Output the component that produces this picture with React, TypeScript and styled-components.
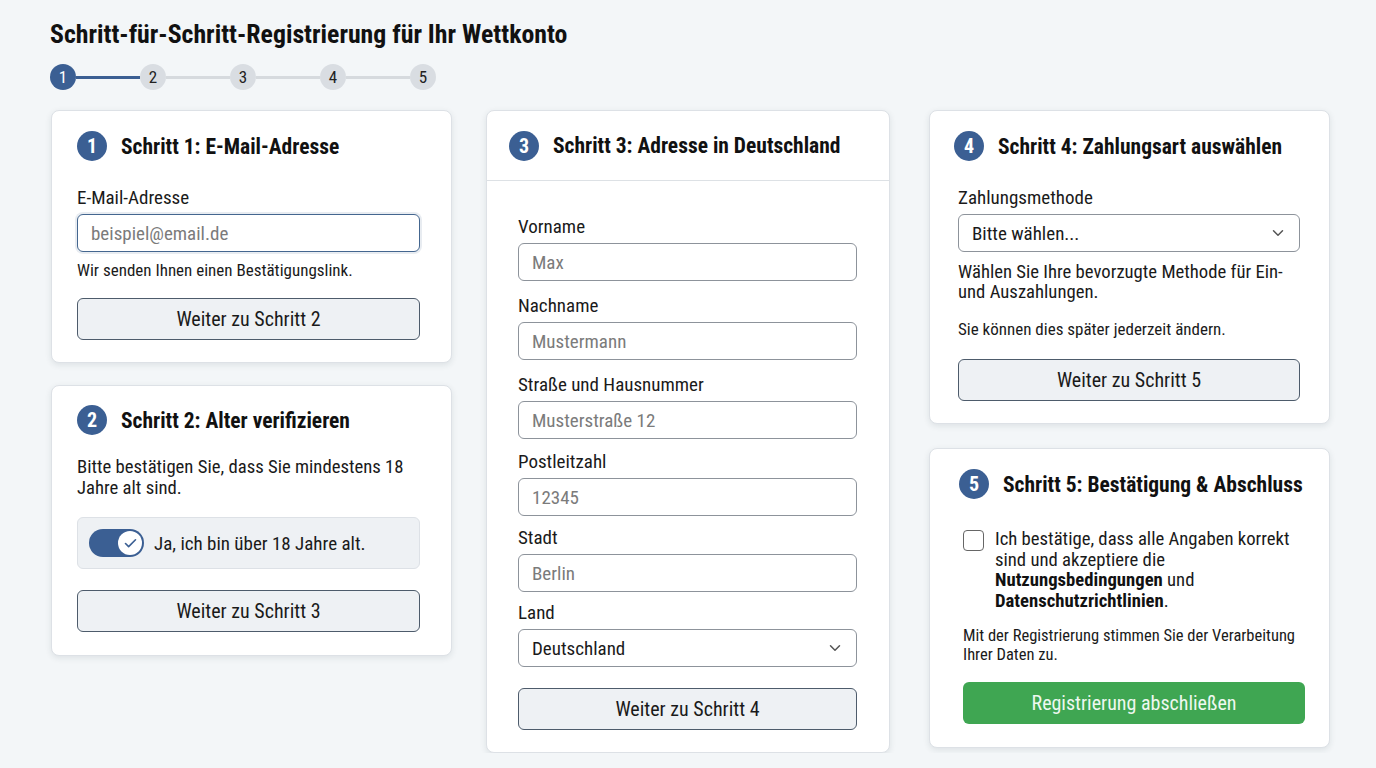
import styled, { createGlobalStyle } from "styled-components";
import { Check, ChevronDown } from "lucide-react";

const Global = createGlobalStyle`
  body {
    margin: 0;
    background: #f3f6f8;
    font-family: "Roboto Condensed", Roboto, "Liberation Sans", sans-serif;
    font-stretch: condensed;
    color: #151515;
  }
  * { box-sizing: border-box; }
`;

const BLUE = "#3b5f93";

export default function App() {
  return (
    <>
      <Global />
      <Page>
        <Title>Schritt-für-Schritt-Registrierung für Ihr Wettkonto</Title>
        <Stepper>
          {[1, 2, 3, 4, 5].map((n) => (
            <StepItem key={n}>
              {n > 1 && <StepLine $done={n === 2} />}
              <StepDot $active={n === 1}>{n}</StepDot>
            </StepItem>
          ))}
        </Stepper>

        <Columns>
          <Column $gap={22}>
            <Card $pad="20px 31px 22px 25px">
              <CardHeader>
                <Badge>1</Badge>
                <CardTitle>Schritt 1: E-Mail-Adresse</CardTitle>
              </CardHeader>
              <Label $top={26}>E-Mail-Adresse</Label>
              <TextInput $focus placeholder="beispiel@email.de" readOnly />
              <Hint $top={8}>Wir senden Ihnen einen Bestätigungslink.</Hint>
              <Button $top={18}>Weiter zu Schritt 2</Button>
            </Card>

            <Card $pad="19px 31px 23px 25px">
              <CardHeader>
                <Badge>2</Badge>
                <CardTitle>Schritt 2: Alter verifizieren</CardTitle>
              </CardHeader>
              <Text $top={22}>
                Bitte bestätigen Sie, dass Sie mindestens 18 Jahre alt sind.
              </Text>
              <ToggleRow>
                <Toggle>
                  <Knob>
                    <Check size={15} strokeWidth={2.6} color={BLUE} />
                  </Knob>
                </Toggle>
                <span>Ja, ich bin über 18 Jahre alt.</span>
              </ToggleRow>
              <Button $top={21}>Weiter zu Schritt 3</Button>
            </Card>
          </Column>

          <Column $gap={0}>
            <Card $pad="0">
              <BandHeader>
                <Badge>3</Badge>
                <CardTitle>Schritt 3: Adresse in Deutschland</CardTitle>
              </BandHeader>
              <CardBody>
                <Label>Vorname</Label>
                <TextInput placeholder="Max" readOnly />
                <Label $top={14}>Nachname</Label>
                <TextInput placeholder="Mustermann" readOnly />
                <Label $top={14}>Straße und Hausnummer</Label>
                <TextInput placeholder="Musterstraße 12" readOnly />
                <Label $top={12}>Postleitzahl</Label>
                <TextInput placeholder="12345" readOnly />
                <Label $top={11}>Stadt</Label>
                <TextInput placeholder="Berlin" readOnly />
                <Label $top={10}>Land</Label>
                <SelectBox>
                  <span>Deutschland</span>
                  <ChevronDown size={18} color="#555" />
                </SelectBox>
                <Button $top={21}>Weiter zu Schritt 4</Button>
              </CardBody>
            </Card>
          </Column>

          <Column $gap={24} $offset={5}>
            <Card $pad="20px 29px 22px 24px">
              <CardHeader>
                <Badge>4</Badge>
                <CardTitle>Schritt 4: Zahlungsart auswählen</CardTitle>
              </CardHeader>
              <Inset>
                <Label $top={26}>Zahlungsmethode</Label>
                <SelectBox>
                  <span>Bitte wählen...</span>
                  <ChevronDown size={18} color="#555" />
                </SelectBox>
                <Text $top={10} $lh={20}>
                  Wählen Sie Ihre bevorzugte Methode für Ein- und Auszahlungen.
                </Text>
                <Hint $top={17}>Sie können dies später jederzeit ändern.</Hint>
                <Button $top={20}>Weiter zu Schritt 5</Button>
              </Inset>
            </Card>

            <Card $pad="20px 24px 23px 29px">
              <CardHeader>
                <Badge>5</Badge>
                <CardTitle>Schritt 5: Bestätigung &amp; Abschluss</CardTitle>
              </CardHeader>
              <Inset>
                <CheckRow>
                  <CheckBox />
                  <span>
                    Ich bestätige, dass alle Angaben korrekt sind und akzeptiere
                    die <b>Nutzungsbedingungen</b> und{" "}
                    <b>Datenschutzrichtlinien</b>.
                  </span>
                </CheckRow>
                <Hint $top={15} $lh={19} $size={16.5}>
                  Mit der Registrierung stimmen Sie der Verarbeitung Ihrer Daten
                  zu.
                </Hint>
                <Button $top={18} $primary>
                  Registrierung abschließen
                </Button>
              </Inset>
            </Card>
          </Column>
        </Columns>
      </Page>
    </>
  );
}

const Page = styled.div`
  padding: 19px 46px 0 50px;
`;

const Title = styled.h1`
  margin: 0;
  font-size: 25.8px;
  line-height: 30px;
  font-weight: 700;
  color: #111;
`;

const Stepper = styled.div`
  display: flex;
  align-items: center;
  margin-top: 15px;
`;

const StepItem = styled.div`
  display: flex;
  align-items: center;
`;

const StepLine = styled.div<{ $done?: boolean }>`
  width: 64px;
  height: 3px;
  background: ${(p) => (p.$done ? BLUE : "#d6dade")};
`;

const StepDot = styled.div<{ $active?: boolean }>`
  width: 26px;
  height: 26px;
  border-radius: 50%;
  display: flex;
  align-items: center;
  justify-content: center;
  font-size: 17px;
  background: ${(p) => (p.$active ? BLUE : "#d9dde2")};
  color: ${(p) => (p.$active ? "#fff" : "#222")};
`;

const Columns = styled.div`
  display: grid;
  grid-template-columns: 401px 404px 406px;
  column-gap: 34px;
  align-items: start;
  margin-top: 20px;
  margin-left: 1px;
`;

const Column = styled.div<{ $gap: number; $offset?: number }>`
  display: flex;
  flex-direction: column;
  gap: ${(p) => p.$gap}px;
  margin-left: ${(p) => p.$offset || 0}px;
`;

const Card = styled.section<{ $pad: string }>`
  background: #fff;
  border: 1px solid #dde1e6;
  border-radius: 8px;
  box-shadow: 0 2px 6px rgba(30, 45, 60, 0.1);
  padding: ${(p) => p.$pad};
  display: flex;
  flex-direction: column;
`;

const CardHeader = styled.div`
  display: flex;
  align-items: center;
  gap: 14px;
  height: 30px;
`;

const BandHeader = styled(CardHeader)`
  height: 70px;
  padding-left: 22px;
  border-bottom: 1px solid #dde1e5;
`;

const CardBody = styled.div`
  padding: 35px 32px 22px 31px;
  display: flex;
  flex-direction: column;
`;

const Inset = styled.div`
  display: flex;
  flex-direction: column;
  padding-left: 4px;
`;

const Badge = styled.div`
  width: 30px;
  height: 30px;
  border-radius: 50%;
  background: ${BLUE};
  color: #fff;
  font-weight: 700;
  font-size: 20px;
  display: flex;
  align-items: center;
  justify-content: center;
  flex-shrink: 0;
`;

const CardTitle = styled.h2`
  margin: 0;
  font-size: 21.5px;
  font-weight: 700;
  white-space: nowrap;
  color: #111;
`;

const Label = styled.label<{ $top?: number }>`
  display: block;
  font-size: 19px;
  line-height: 22px;
  margin-top: ${(p) => p.$top || 0}px;
  margin-bottom: 5px;
  color: #1a1a1a;
`;

const TextInput = styled.input<{ $focus?: boolean }>`
  width: 100%;
  height: 38px;
  padding: 0 13px;
  font: inherit;
  font-size: 19px;
  color: #222;
  background: #fff;
  border-radius: 6px;
  outline: none;
  border: ${(p) => (p.$focus ? `1.5px solid #44668f` : "1px solid #8d939b")};
  box-shadow: ${(p) =>
    p.$focus ? "0 0 0 2px rgba(68, 102, 143, 0.12)" : "none"};
  &::placeholder {
    color: #7b7b7b;
  }
`;

const SelectBox = styled.div`
  height: 38px;
  display: flex;
  align-items: center;
  justify-content: space-between;
  padding: 0 12px 0 13px;
  border: 1px solid #8d939b;
  border-radius: 6px;
  font-size: 19px;
  color: #1a1a1a;
  background: #fff;
`;

const Text = styled.p<{ $top?: number; $lh?: number }>`
  margin: ${(p) => p.$top || 0}px 0 0;
  font-size: 18.7px;
  line-height: ${(p) => p.$lh || 21}px;
  color: #1a1a1a;
`;

const Hint = styled.p<{ $top?: number; $lh?: number; $size?: number }>`
  margin: ${(p) => p.$top || 0}px 0 0;
  font-size: ${(p) => p.$size || 17}px;
  line-height: ${(p) => p.$lh || 20}px;
  color: #1a1a1a;
`;

const Button = styled.button<{ $top?: number; $primary?: boolean }>`
  margin-top: ${(p) => p.$top || 0}px;
  height: 42px;
  width: 100%;
  border-radius: 6px;
  font: inherit;
  font-size: 20px;
  cursor: pointer;
  background: ${(p) => (p.$primary ? "#3fa652" : "#eef1f4")};
  color: ${(p) => (p.$primary ? "#eef8f0" : "#1a1a1a")};
  border: ${(p) => (p.$primary ? "none" : "1.5px solid #4d5b6b")};
`;

const ToggleRow = styled.div`
  margin-top: 18px;
  height: 52px;
  display: flex;
  align-items: center;
  gap: 10px;
  padding-left: 11px;
  background: #eef1f4;
  border: 1px solid #dde1e6;
  border-radius: 6px;
  font-size: 19px;
  color: #1a1a1a;
`;

const Toggle = styled.div`
  width: 55px;
  height: 28px;
  border-radius: 14px;
  background: ${BLUE};
  display: flex;
  align-items: center;
  justify-content: flex-end;
  padding-right: 2px;
`;

const Knob = styled.div`
  width: 24px;
  height: 24px;
  border-radius: 50%;
  background: #fff;
  display: flex;
  align-items: center;
  justify-content: center;
`;

const CheckRow = styled.label`
  margin-top: 30px;
  display: flex;
  align-items: flex-start;
  gap: 11px;
  font-size: 18.7px;
  line-height: 20.5px;
  color: #1a1a1a;
  b {
    font-weight: 700;
    color: #111;
  }
`;

const CheckBox = styled.span`
  flex-shrink: 0;
  width: 21px;
  height: 21px;
  margin-top: 1px;
  border: 1.5px solid #666;
  border-radius: 4px;
  background: #fff;
`;
